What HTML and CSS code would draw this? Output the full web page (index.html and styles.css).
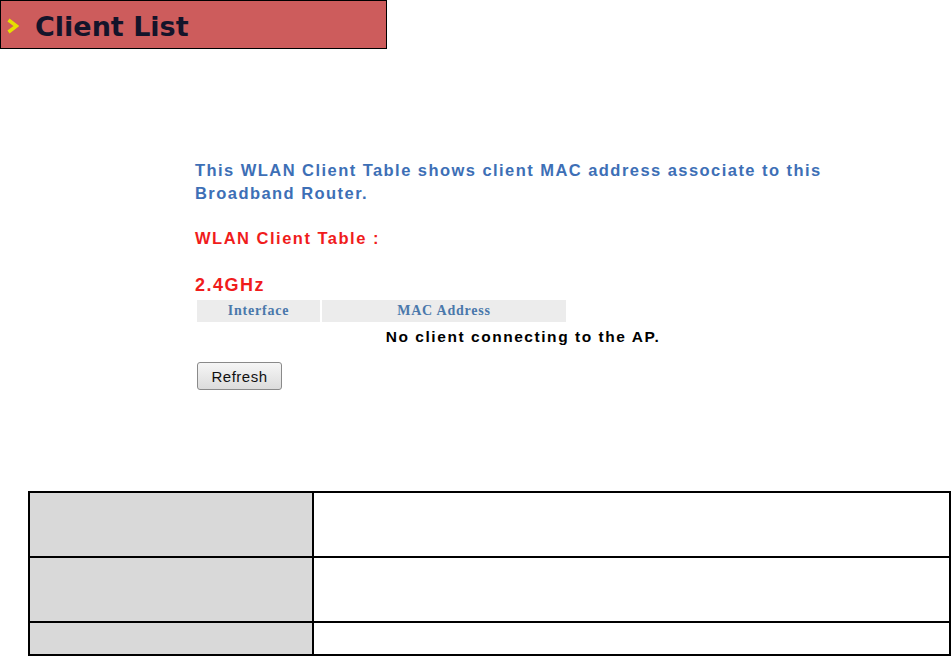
FILE: index.html
```html
<!DOCTYPE html>
<html lang="en">
<head>
    <meta charset="UTF-8">
    <title>Client List</title>
    <link rel="stylesheet" href="styles.css">
</head>
<body>
    <div class="title-bar">
        <svg class="chevron" width="12" height="16" viewBox="0 0 12 16">
            <polyline points="1.5,2 9.5,8 1.5,14" fill="none" stroke="#e6e000" stroke-width="3.5"/>
        </svg>
        <span class="title">Client List</span>
    </div>

    <div class="panel">
        <p class="intro">This WLAN Client Table shows client MAC address associate to this<br>Broadband Router.</p>
        <div class="section-title">WLAN Client Table :</div>
        <div class="band">2.4GHz</div>
        <div class="client-head">
            <div class="head-cell">Interface</div>
            <div class="head-cell">MAC Address</div>
        </div>
        <div class="empty-row">No client connecting to the AP.</div>
        <button class="refresh">Refresh</button>
    </div>

    <table class="info">
        <tr class="tall"><td class="key"></td><td></td></tr>
        <tr class="tall"><td class="key"></td><td></td></tr>
        <tr class="short"><td class="key"></td><td></td></tr>
    </table>
</body>
</html>
```

FILE: styles.css
```css
body {
    margin: 0;
    font-family: "Liberation Sans", Arial, sans-serif;
    background: #fff;
}
.title-bar {
    display: flex;
    align-items: center;
    width: 385px;
    height: 47px;
    background-color: #cd5c5c;
    border: 1px solid #000;
}
.chevron {
    margin-left: 6px;
    margin-top: 2px;
}
.title {
    margin-left: 16px;
    margin-top: 3px;
    font-family: "DejaVu Sans", Verdana, sans-serif;
    font-weight: bold;
    font-size: 27px;
    color: #14142a;
}
.panel {
    margin-left: 195px;
    padding-top: 110px;
}
.intro {
    margin: 0;
    font-size: 16.5px;
    font-weight: bold;
    line-height: 23px;
    letter-spacing: 1.45px;
    color: #3d6fb6;
}
.section-title {
    margin-top: 23px;
    font-size: 16.5px;
    font-weight: bold;
    line-height: 20px;
    letter-spacing: 1.5px;
    color: #f01c1c;
}
.band {
    margin-top: 26px;
    font-size: 18px;
    font-weight: bold;
    line-height: 22px;
    letter-spacing: 1.5px;
    color: #f01c1c;
}
.client-head {
    display: grid;
    grid-template-columns: 123px 244px;
    gap: 2px;
    margin-top: 4px;
    margin-left: 2px;
}
.head-cell {
    height: 22px;
    line-height: 22px;
    background: #ececec;
    text-align: center;
    font-family: "Liberation Serif", "Times New Roman", serif;
    font-weight: bold;
    font-size: 14px;
    letter-spacing: 0.8px;
    color: #4a78ab;
}
.empty-row {
    width: 656px;
    height: 30px;
    line-height: 30px;
    text-align: center;
    font-size: 15.5px;
    font-weight: bold;
    letter-spacing: 1.55px;
    color: #000;
}
.refresh {
    display: block;
    margin-top: 10px;
    margin-left: 2px;
    width: 85px;
    height: 28px;
    padding: 0;
    font-family: "Liberation Sans", Arial, sans-serif;
    font-size: 15px;
    letter-spacing: 0.5px;
    color: #111;
    background: linear-gradient(#f6f6f6, #dcdcdc);
    border: 1px solid #8a8a8a;
    border-radius: 3px;
}
.info {
    margin-top: 101px;
    margin-left: 28px;
    width: 923px;
    border-collapse: collapse;
}
.info td {
    border: 2px solid #000;
    padding: 0;
}
.info .key {
    width: 282px;
    background: #d9d9d9;
}
.info .tall td {
    height: 63px;
}
.info .short td {
    height: 31px;
}
```
